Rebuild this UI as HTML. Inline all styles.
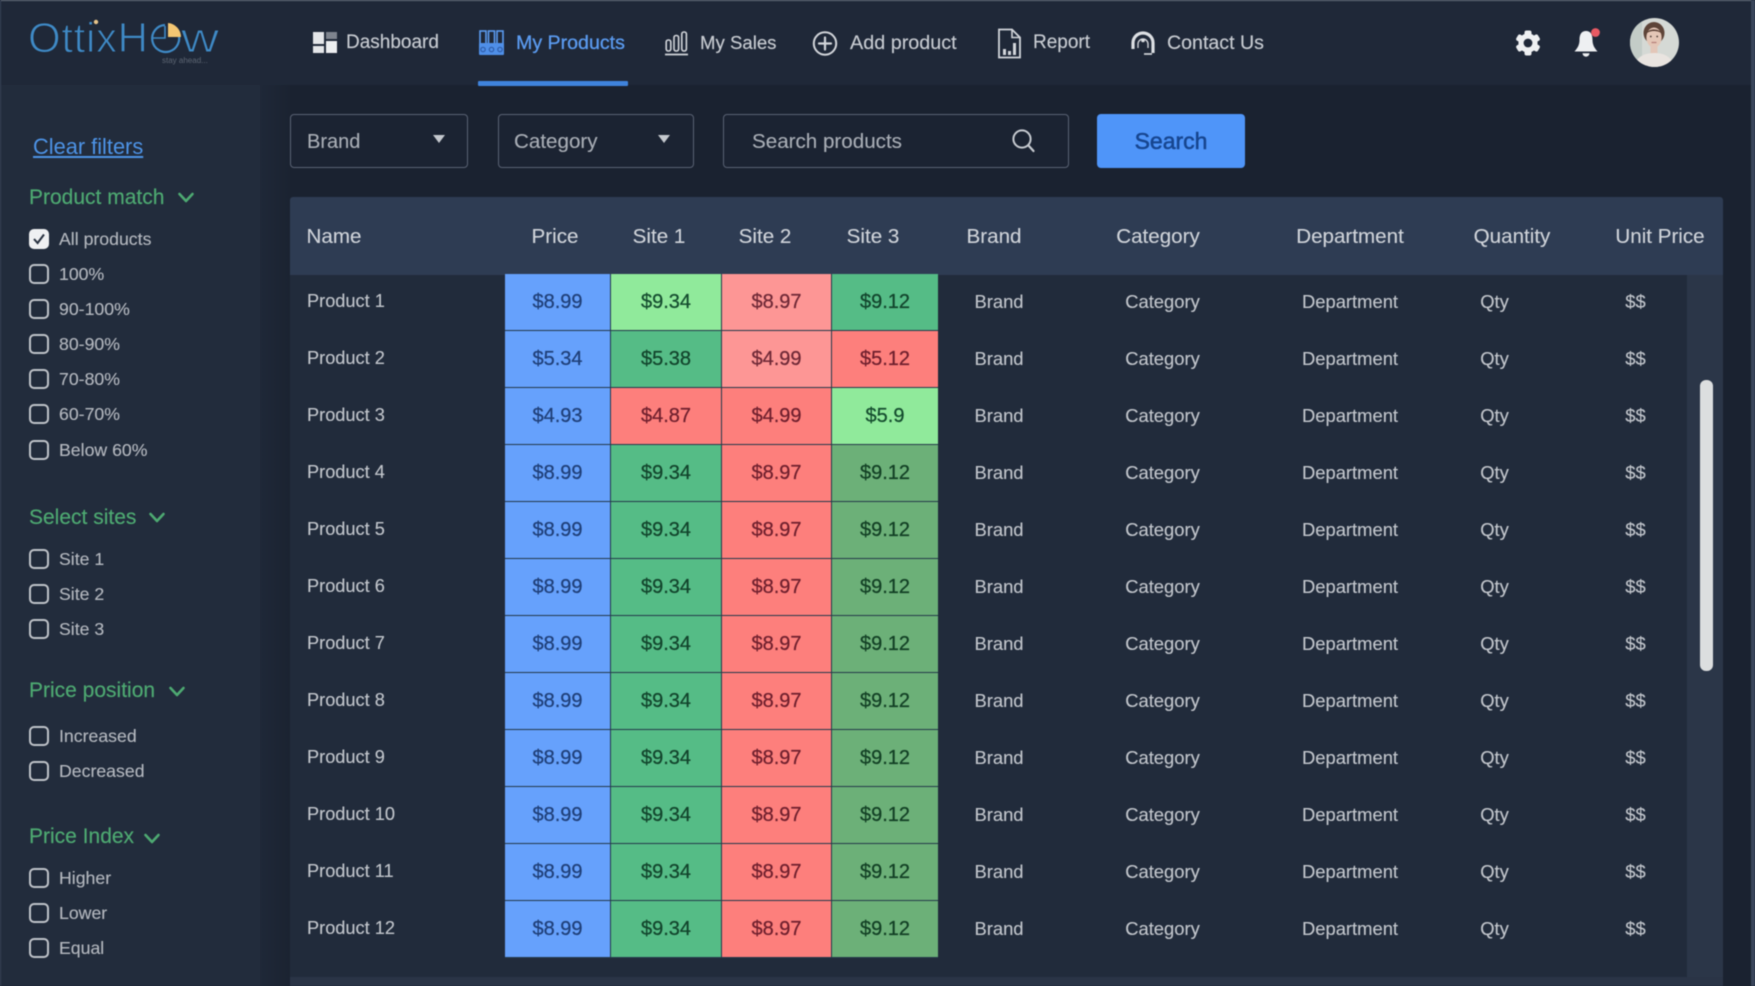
<!DOCTYPE html>
<html lang="en">
<head>
<meta charset="utf-8">
<title>OttixHow - My Products</title>
<style>
html,body{margin:0;padding:0;width:1755px;height:986px;overflow:hidden;background:#1a2230}
body{font-family:"Liberation Sans",sans-serif;color:#c8ccd2}
#app{position:absolute;left:0;top:0;width:1755px;height:986px;overflow:hidden;background:#1a2230;filter:blur(.45px)}
#app div,#app span.a,#app svg{position:absolute}
.top{left:0;top:0;width:1755px;height:85px;background:#1f2838}
.topline{left:0;top:0;width:1755px;height:1px;background:#6a7280}
.rightline{left:1751px;top:0;width:4px;height:986px;background:#39455a}
.leftline{left:0;top:0;width:1px;height:986px;background:#39455a}
.side{left:0;top:85px;width:260px;height:901px;background:#222c3c}
.band{left:260px;top:85px;width:30px;height:901px;background:linear-gradient(90deg,#1f2838,#1b2331)}
.nav{top:29px;height:28px;line-height:28px;font-size:19px;color:#c8ccd2;white-space:nowrap;-webkit-text-stroke:.15px #c8ccd2}
.nav.on{color:#5b9bf0;-webkit-text-stroke:.3px #5b9bf0}
.under{left:478px;top:81px;width:150px;height:5px;background:#3f83dc;border-radius:1px}
.field{height:54px;border:1.5px solid #596273;border-radius:4px;box-sizing:border-box;background:#1b2332}
.ft{top:128px;height:28px;line-height:28px;font-size:20px;color:#a9aeb6;white-space:nowrap;-webkit-text-stroke:.12px #a9aeb6}
.arrow{width:0;height:0;border-left:6.5px solid transparent;border-right:6.5px solid transparent;border-top:8px solid #c4c8ce;top:135px}
.btn{left:1097px;top:114px;width:148px;height:54px;background:#4f95f9;border-radius:4px;text-align:center;line-height:55px;font-size:23px;color:#174690;-webkit-text-stroke:.55px #174690}
.thead{left:290px;top:197px;width:1433px;height:78px;background:#2e3c53;border-radius:3px 3px 0 0}
.th{top:223px;height:28px;line-height:28px;font-size:20.6px;color:#d0d4da;white-space:nowrap;transform:translateX(-50%);-webkit-text-stroke:.12px #d0d4da}
.tbody{left:290px;top:275px;width:1397px;height:702px;background:#212b3b}
.track{left:1687px;top:275px;width:36px;height:702px;background:#2b3648}
.thumb{left:1700px;top:380px;width:13px;height:291px;background:#dcdedf;border-radius:6px}
.hbar{left:290px;top:977px;width:1433px;height:9px;background:#2a3446}
.clear{left:33px;top:133px;font-size:21.8px;line-height:28px;color:#4d93e6;text-decoration:underline;white-space:nowrap}
.h{left:29px;font-size:21px;line-height:26px;color:#4eaa72;white-space:nowrap;-webkit-text-stroke:.15px #4eaa72}
.cb{left:29px;width:20px;height:20px;box-sizing:border-box;border:2.2px solid #bfc3c9;border-radius:5px}
.l{left:59px;font-size:17.7px;line-height:24px;color:#b4b8bf;white-space:nowrap;-webkit-text-stroke:.12px #b4b8bf}
.chev{fill:none;stroke:#4eaa72;stroke-width:2.6;stroke-linecap:round;stroke-linejoin:round}
.row{left:0;width:1755px;height:57px}
.row .n,.row .t{top:14px;line-height:27px;height:27px;font-size:18.4px;color:#c2c6cc;white-space:nowrap;-webkit-text-stroke:.12px #c2c6cc}
.row .n{left:307px;font-size:18.2px}
.row .t{transform:translateX(-50%)}
.c{top:0;height:56px;line-height:56px;text-align:center;font-size:20px;-webkit-text-stroke:.25px currentColor}
.c1{left:505px;width:105px}.c2{left:611px;width:110px}.c3{left:722px;width:109px}.c4{left:832px;width:106px}
.B{background:#66a1fc;color:#1f3f78}
.LG{background:#90ea9b;color:#144c2e}
.LR{background:#fd9695;color:#6e2836}
.G{background:#55bc86;color:#12442c}
.R{background:#fd7f7c;color:#6e1f2d}
.O{background:#6cb078;color:#123f24}
.x1{left:999px}.x2{left:1162.5px}.x3{left:1350px}.x4{left:1494.5px}.x5{left:1635.5px}
</style>
</head>
<body>
<div id="app">
  <div class="band"></div>
  <div class="side"></div>
  <div class="top"></div>
  <div class="topline"></div>
  <div class="rightline"></div>
  <div class="leftline"></div>

  <!-- logo -->
  <svg style="left:20px;top:12px" width="210" height="60" viewBox="20 12 210 60">
    <g font-family="Liberation Sans, sans-serif" font-size="42" fill="#3f8ac6" stroke="#1f2838" stroke-width="1.1">
      <text x="28" y="52" textLength="120" lengthAdjust="spacing">OttixH</text>
      <text x="181" y="52" textLength="38" lengthAdjust="spacingAndGlyphs">w</text>
    </g>
    <circle cx="96" cy="22" r="2.2" fill="#e7c48a"/>
    <path d="M178 33A13.5 13.5 0 1 1 165 25" fill="none" stroke="#3f8ac6" stroke-width="2.2"/>
    <path d="M153 38H165V26" fill="none" stroke="#3f8ac6" stroke-width="1.6"/>
    <path d="M168 23A14 14 0 0 1 181 37L168 37Z" fill="#f3c673"/>
    <text x="162" y="63" font-family="Liberation Sans, sans-serif" font-size="8" fill="#5d6673">stay ahead...</text>
  </svg>

  <!-- nav -->
  <svg style="left:313px;top:31px" width="25" height="24" viewBox="0 0 25 24">
    <rect x="0" y="1" width="11" height="12" fill="#e4e6e9"/>
    <rect x="13" y="1" width="11" height="7" fill="#7e848e"/>
    <rect x="0" y="15" width="11" height="7" fill="#e4e6e9"/>
    <rect x="13" y="10" width="11" height="12" fill="#eceef0"/>
  </svg>
  <div class="nav" style="left:346px">Dashboard</div>

  <svg style="left:479px;top:30px" width="25" height="25" viewBox="0 0 25 25">
    <g fill="none" stroke="#5b9bf0" stroke-width="1.6">
      <rect x="1" y="1" width="6" height="13"/><rect x="9.5" y="1" width="6" height="13"/><rect x="18" y="1" width="6" height="13"/>
    </g>
    <rect x="0" y="13" width="25" height="12" rx="1" fill="#4f8fe8"/>
    <g fill="none" stroke="#2f5da8" stroke-width="1.2"><circle cx="4" cy="19.5" r="2.2"/><circle cx="12.5" cy="19.5" r="2.2"/><circle cx="21" cy="19.5" r="2.2"/></g>
  </svg>
  <div class="nav on" style="left:516px;font-size:19.6px">My Products</div>
  <div class="under"></div>

  <svg style="left:665px;top:31px" width="23" height="25" viewBox="0 0 23 25">
    <g fill="none" stroke="#d2d5da" stroke-width="1.6">
      <rect x="1.2" y="9" width="4.6" height="11" rx="2"/><rect x="9" y="4.5" width="4.6" height="15.5" rx="2"/><rect x="16.8" y="1" width="4.6" height="19" rx="2"/>
    </g>
    <path d="M0 23.5H23" stroke="#d2d5da" stroke-width="1.8"/>
  </svg>
  <div class="nav" style="left:700px;font-size:18.6px">My Sales</div>

  <svg style="left:812px;top:31px" width="26" height="25" viewBox="0 0 26 25">
    <circle cx="13" cy="12.5" r="11.2" fill="none" stroke="#d2d5da" stroke-width="2"/>
    <path d="M13 6.5V18.5M7 12.5H19" stroke="#d2d5da" stroke-width="2.2" stroke-linecap="round"/>
  </svg>
  <div class="nav" style="left:850px;font-size:19.8px">Add product</div>

  <svg style="left:997px;top:28px" width="25" height="31" viewBox="0 0 25 31">
    <path d="M2 1.5H15L23 9.5V29.5H2Z" fill="none" stroke="#d2d5da" stroke-width="1.8"/>
    <path d="M15 1.5V9.5H23" fill="none" stroke="#d2d5da" stroke-width="1.6"/>
    <rect x="6" y="21" width="3" height="6" fill="#d2d5da"/><rect x="11" y="23" width="3" height="4" fill="#d2d5da"/><rect x="16" y="15" width="3" height="12" fill="#d2d5da"/>
  </svg>
  <div class="nav" style="left:1033px">Report</div>

  <svg style="left:1130px;top:31px" width="26" height="24" viewBox="0 0 26 24">
    <path d="M3 18V12A10 10 0 0 1 23 12V22" fill="none" stroke="#dcdfe3" stroke-width="3.2"/>
    <path d="M8 17V13A5 5 0 0 1 18 13V17" fill="none" stroke="#cfd2d7" stroke-width="1.4"/>
    <circle cx="13" cy="9.5" r="1.8" fill="#dcdfe3"/>
    <path d="M14 23H22" stroke="#dcdfe3" stroke-width="1.6"/>
  </svg>
  <div class="nav" style="left:1167px;font-size:19.6px">Contact Us</div>

  <svg style="left:1514px;top:29px" width="28" height="28" viewBox="0 0 28 28">
    <g fill="#eef0f2">
      <circle cx="14" cy="14" r="9.6"/>
      <g>
        <rect x="10.5" y="1.5" width="7" height="25" rx="2"/>
        <rect x="10.5" y="1.5" width="7" height="25" rx="2" transform="rotate(60 14 14)"/>
        <rect x="10.5" y="1.5" width="7" height="25" rx="2" transform="rotate(120 14 14)"/>
      </g>
    </g>
    <circle cx="14" cy="14" r="4.4" fill="#1f2838"/>
  </svg>

  <svg style="left:1573px;top:27px" width="30" height="31" viewBox="0 0 30 31">
    <path d="M13 4C7.5 4 6.5 9 6.5 13C6.5 18 4.5 21 1.5 24.5H24.5C21.5 21 19.5 18 19.5 13C19.5 9 18.5 4 13 4Z" fill="#eef0f2"/>
    <path d="M9.5 26.2H16.5A3.5 3.5 0 0 1 9.5 26.2Z" fill="#eef0f2"/>
    <circle cx="22.5" cy="5.5" r="4.4" fill="#e85a63"/>
  </svg>

  <svg style="left:1630px;top:18px" width="49" height="49" viewBox="0 0 49 49">
    <defs><clipPath id="av"><circle cx="24.5" cy="24.5" r="24.5"/></clipPath></defs>
    <g clip-path="url(#av)">
      <rect width="49" height="49" fill="#d5d9d5"/>
      <rect x="0" y="0" width="12" height="49" fill="#c3ccc7"/>
      <ellipse cx="24" cy="15" rx="10.5" ry="11" fill="#5e4438"/>
      <ellipse cx="24" cy="19.5" rx="7.6" ry="10" fill="#e4c6b6"/>
      <path d="M16 16C18 10 30 10 32 16C29 12 19 12 16 16Z" fill="#54392e"/>
      <rect x="20.5" y="27" width="7" height="9" fill="#e3c6b8"/>
      <path d="M4 49C6 38 16 35 24 35C33 35 42 38 44 49Z" fill="#e9e4e0"/>
      <circle cx="20.8" cy="18.5" r=".9" fill="#4b3a33"/><circle cx="27.2" cy="18.5" r=".9" fill="#4b3a33"/>
      <path d="M21.5 24.5H26.5" stroke="#b67f7a" stroke-width="1.2"/>
    </g>
  </svg>

  <!-- filter bar -->
  <div class="field" style="left:290px;top:114px;width:178px"></div>
  <div class="ft" style="left:307px">Brand</div>
  <div class="arrow" style="left:433px"></div>
  <div class="field" style="left:497.5px;top:114px;width:196px"></div>
  <div class="ft" style="left:514px;font-size:20.6px">Category</div>
  <div class="arrow" style="left:657.5px"></div>
  <div class="field" style="left:722.5px;top:114px;width:346px"></div>
  <div class="ft" style="left:752px;font-size:20.6px">Search products</div>
  <svg style="left:1011px;top:128px" width="25" height="25" viewBox="0 0 25 25">
    <circle cx="11" cy="11" r="8.6" fill="none" stroke="#c6cad0" stroke-width="2"/>
    <path d="M17.5 17.5L22.5 23" stroke="#c6cad0" stroke-width="2.2" stroke-linecap="round"/>
  </svg>
  <div class="btn">Search</div>

  <!-- sidebar -->
  <div class="clear">Clear filters</div>

  <div class="h" style="top:185px">Product match</div>
  <svg style="left:177px;top:191px" width="18" height="13" viewBox="0 0 18 13"><path class="chev" d="M2.5 3L9 10L15.5 3"/></svg>
  <div class="cb" style="top:229px;background:#eff0f2;border-color:#eff0f2"></div>
  <svg style="left:31px;top:231px" width="16" height="16" viewBox="0 0 16 16"><path d="M3 8L6.6 12L13 3.5" fill="none" stroke="#27303f" stroke-width="2"/></svg>
  <div class="l" style="top:227px">All products</div>
  <div class="cb" style="top:264px"></div><div class="l" style="top:262px">100%</div>
  <div class="cb" style="top:299px"></div><div class="l" style="top:297px">90-100%</div>
  <div class="cb" style="top:334px"></div><div class="l" style="top:332px">80-90%</div>
  <div class="cb" style="top:369px"></div><div class="l" style="top:367px">70-80%</div>
  <div class="cb" style="top:404px"></div><div class="l" style="top:402px">60-70%</div>
  <div class="cb" style="top:440px"></div><div class="l" style="top:438px">Below 60%</div>

  <div class="h" style="top:505px">Select sites</div>
  <svg style="left:148px;top:511px" width="18" height="13" viewBox="0 0 18 13"><path class="chev" d="M2.5 3L9 10L15.5 3"/></svg>
  <div class="cb" style="top:549px"></div><div class="l" style="top:547px">Site 1</div>
  <div class="cb" style="top:584px"></div><div class="l" style="top:582px">Site 2</div>
  <div class="cb" style="top:619px"></div><div class="l" style="top:617px">Site 3</div>

  <div class="h" style="top:678px">Price position</div>
  <svg style="left:168px;top:685px" width="18" height="13" viewBox="0 0 18 13"><path class="chev" d="M2.5 3L9 10L15.5 3"/></svg>
  <div class="cb" style="top:726px"></div><div class="l" style="top:724px">Increased</div>
  <div class="cb" style="top:761px"></div><div class="l" style="top:759px">Decreased</div>

  <div class="h" style="top:824px">Price Index</div>
  <svg style="left:143px;top:832px" width="18" height="13" viewBox="0 0 18 13"><path class="chev" d="M2.5 3L9 10L15.5 3"/></svg>
  <div class="cb" style="top:868px"></div><div class="l" style="top:866px">Higher</div>
  <div class="cb" style="top:903px"></div><div class="l" style="top:901px">Lower</div>
  <div class="cb" style="top:938px"></div><div class="l" style="top:936px">Equal</div>

  <!-- table -->
  <div class="thead"></div>
  <div class="tbody"></div>
  <div class="track"></div>
  <div class="thumb"></div>
  <div class="hbar"></div>
  <div style="left:505px;top:274px;width:433px;height:684px;background:#24394a"></div>

  <div class="th" style="left:334px">Name</div>
  <div class="th" style="left:555px">Price</div>
  <div class="th" style="left:659px">Site 1</div>
  <div class="th" style="left:765px">Site 2</div>
  <div class="th" style="left:873px">Site 3</div>
  <div class="th" style="left:994px">Brand</div>
  <div class="th" style="left:1158px">Category</div>
  <div class="th" style="left:1350px">Department</div>
  <div class="th" style="left:1512px">Quantity</div>
  <div class="th" style="left:1660px">Unit Price</div>

  <div class="row" style="top:274px"><div class="n">Product 1</div><div class="c c1 B">$8.99</div><div class="c c2 LG">$9.34</div><div class="c c3 LR">$8.97</div><div class="c c4 G">$9.12</div><div class="t x1">Brand</div><div class="t x2">Category</div><div class="t x3">Department</div><div class="t x4">Qty</div><div class="t x5">$$</div></div>
  <div class="row" style="top:331px"><div class="n">Product 2</div><div class="c c1 B">$5.34</div><div class="c c2 G">$5.38</div><div class="c c3 LR">$4.99</div><div class="c c4 R">$5.12</div><div class="t x1">Brand</div><div class="t x2">Category</div><div class="t x3">Department</div><div class="t x4">Qty</div><div class="t x5">$$</div></div>
  <div class="row" style="top:388px"><div class="n">Product 3</div><div class="c c1 B">$4.93</div><div class="c c2 R">$4.87</div><div class="c c3 R">$4.99</div><div class="c c4 LG">$5.9</div><div class="t x1">Brand</div><div class="t x2">Category</div><div class="t x3">Department</div><div class="t x4">Qty</div><div class="t x5">$$</div></div>
  <div class="row" style="top:445px"><div class="n">Product 4</div><div class="c c1 B">$8.99</div><div class="c c2 G">$9.34</div><div class="c c3 R">$8.97</div><div class="c c4 O">$9.12</div><div class="t x1">Brand</div><div class="t x2">Category</div><div class="t x3">Department</div><div class="t x4">Qty</div><div class="t x5">$$</div></div>
  <div class="row" style="top:502px"><div class="n">Product 5</div><div class="c c1 B">$8.99</div><div class="c c2 G">$9.34</div><div class="c c3 R">$8.97</div><div class="c c4 O">$9.12</div><div class="t x1">Brand</div><div class="t x2">Category</div><div class="t x3">Department</div><div class="t x4">Qty</div><div class="t x5">$$</div></div>
  <div class="row" style="top:559px"><div class="n">Product 6</div><div class="c c1 B">$8.99</div><div class="c c2 G">$9.34</div><div class="c c3 R">$8.97</div><div class="c c4 O">$9.12</div><div class="t x1">Brand</div><div class="t x2">Category</div><div class="t x3">Department</div><div class="t x4">Qty</div><div class="t x5">$$</div></div>
  <div class="row" style="top:616px"><div class="n">Product 7</div><div class="c c1 B">$8.99</div><div class="c c2 G">$9.34</div><div class="c c3 R">$8.97</div><div class="c c4 O">$9.12</div><div class="t x1">Brand</div><div class="t x2">Category</div><div class="t x3">Department</div><div class="t x4">Qty</div><div class="t x5">$$</div></div>
  <div class="row" style="top:673px"><div class="n">Product 8</div><div class="c c1 B">$8.99</div><div class="c c2 G">$9.34</div><div class="c c3 R">$8.97</div><div class="c c4 O">$9.12</div><div class="t x1">Brand</div><div class="t x2">Category</div><div class="t x3">Department</div><div class="t x4">Qty</div><div class="t x5">$$</div></div>
  <div class="row" style="top:730px"><div class="n">Product 9</div><div class="c c1 B">$8.99</div><div class="c c2 G">$9.34</div><div class="c c3 R">$8.97</div><div class="c c4 O">$9.12</div><div class="t x1">Brand</div><div class="t x2">Category</div><div class="t x3">Department</div><div class="t x4">Qty</div><div class="t x5">$$</div></div>
  <div class="row" style="top:787px"><div class="n">Product 10</div><div class="c c1 B">$8.99</div><div class="c c2 G">$9.34</div><div class="c c3 R">$8.97</div><div class="c c4 O">$9.12</div><div class="t x1">Brand</div><div class="t x2">Category</div><div class="t x3">Department</div><div class="t x4">Qty</div><div class="t x5">$$</div></div>
  <div class="row" style="top:844px"><div class="n">Product 11</div><div class="c c1 B">$8.99</div><div class="c c2 G">$9.34</div><div class="c c3 R">$8.97</div><div class="c c4 O">$9.12</div><div class="t x1">Brand</div><div class="t x2">Category</div><div class="t x3">Department</div><div class="t x4">Qty</div><div class="t x5">$$</div></div>
  <div class="row" style="top:901px"><div class="n">Product 12</div><div class="c c1 B">$8.99</div><div class="c c2 G">$9.34</div><div class="c c3 R">$8.97</div><div class="c c4 O">$9.12</div><div class="t x1">Brand</div><div class="t x2">Category</div><div class="t x3">Department</div><div class="t x4">Qty</div><div class="t x5">$$</div></div>
</div>
</body>
</html>
